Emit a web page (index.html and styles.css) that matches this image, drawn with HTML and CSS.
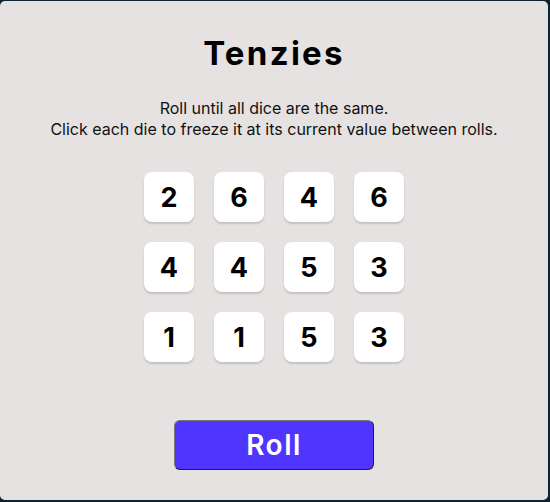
FILE: index.html
```html
<!DOCTYPE html>
<html lang="en">
<head>
<meta charset="utf-8">
<title>Tenzies</title>
<link rel="stylesheet" href="styles.css">
</head>
<body>
<main class="board">
  <h1 class="title">Tenzies</h1>
  <p class="instructions">Roll until all dice are the same.<br>Click each die to freeze it at its current value between rolls.</p>
  <div class="dice">
    <button class="die">2</button>
    <button class="die">6</button>
    <button class="die">4</button>
    <button class="die">6</button>
    <button class="die">4</button>
    <button class="die">4</button>
    <button class="die">5</button>
    <button class="die">3</button>
    <button class="die">1</button>
    <button class="die">1</button>
    <button class="die">5</button>
    <button class="die">3</button>
  </div>
  <button class="roll">Roll</button>
</main>
</body>
</html>
```

FILE: styles.css
```css
html, body {
  margin: 0;
  padding: 0;
}
body {
  background: #0B2434;
  padding-top: 1px;
  height: 502px;
  box-sizing: border-box;
  font-family: Inter, "Noto Sans", sans-serif;
}
.board {
  width: 548px;
  height: 499px;
  background: #E6E2E2;
  border-radius: 5px;
  display: flex;
  flex-direction: column;
  align-items: center;
  box-sizing: border-box;
  padding-top: 32px;
}
.title {
  margin: 0;
  font-size: 33px;
  line-height: 40px;
  font-weight: 700;
  letter-spacing: 2.3px;
  color: #000;
}
.instructions {
  margin: 25px 0 0;
  font-size: 16px;
  line-height: 20.5px;
  text-align: center;
  color: #111;
}
.dice {
  margin-top: 33px;
  display: grid;
  grid-template-columns: repeat(4, 50px);
  grid-auto-rows: 50px;
  gap: 20px;
}
.die {
  border: none;
  background: #fff;
  border-radius: 8px;
  box-shadow: 0 2px 2px rgba(0, 0, 0, 0.15);
  font-family: Inter, "Noto Sans", sans-serif;
  font-size: 27px;
  font-weight: 700;
  letter-spacing: 0;
  color: #000;
  padding: 0;
}
.roll {
  margin-top: 58px;
  width: 200px;
  height: 50px;
  background: #5035FF;
  color: #fff;
  border: 1.5px solid;
  border-color: #777 #222 #222 #777;
  border-radius: 6px;
  font-family: Inter, "Noto Sans", sans-serif;
  font-size: 28px;
  font-weight: 600;
  letter-spacing: 1.5px;
  padding: 0;
}
```
